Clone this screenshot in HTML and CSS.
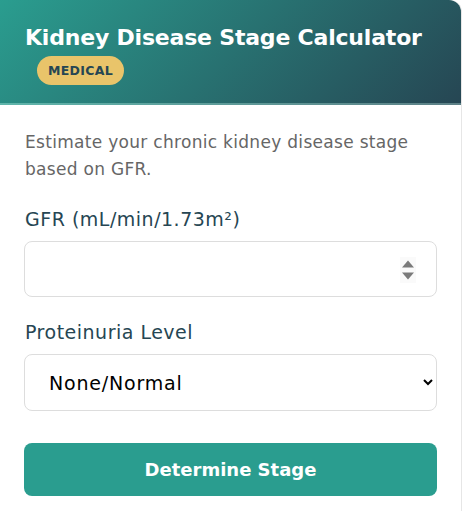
FILE: index.html
```html
<!DOCTYPE html>
<html lang="en">
<head>
<meta charset="utf-8">
<title>Kidney Disease Stage Calculator</title>
<link rel="stylesheet" href="styles.css">
</head>
<body>
<div class="card">
  <div class="header">
    <h1 class="title">Kidney Disease Stage Calculator</h1>
    <span class="badge">MEDICAL</span>
  </div>
  <div class="content">
    <p class="desc">Estimate your chronic kidney disease stage based on GFR.</p>
    <label class="label" for="gfr">GFR (mL/min/1.73m²)</label>
    <div class="num-wrap">
      <input class="field" id="gfr" type="number">
      <svg class="spin" width="16" height="26" viewBox="0 0 16 26" aria-hidden="true">
        <rect x="0" y="0" width="16" height="26" fill="#fafafa"/>
        <path d="M2 10.5 L8 3.5 L14 10.5 Z" fill="#7a7a7a"/>
        <path d="M2 15.5 L8 22.5 L14 15.5 Z" fill="#7a7a7a"/>
      </svg>
    </div>
    <label class="label" for="prot">Proteinuria Level</label>
    <select class="field select" id="prot">
      <option>None/Normal</option>
      <option>Mild</option>
      <option>Severe</option>
    </select>
    <button class="btn" type="button">Determine Stage</button>
  </div>
</div>
</body>
</html>
```
FILE: styles.css
```css
* { box-sizing: border-box; }
body {
  margin: 0;
  font-family: "DejaVu Sans", sans-serif;
  background: #fff;
}
.card {
  width: 461px;
  background: #fff;
  border-radius: 0 12px 0 0;
  box-shadow: 1px 0 0 #e6e6e6;
  overflow: hidden;
}
.header {
  height: 105px;
  padding: 24px 24px 0 25px;
  background: linear-gradient(135deg, #2a9d8f 0%, #264653 100%);
  border-bottom: 2px solid rgba(255, 255, 255, 0.25);
}
.title {
  margin: 0;
  color: #fff;
  font-size: 22px;
  font-weight: 700;
  line-height: 28px;
  letter-spacing: -0.2px;
}
.badge {
  display: inline-block;
  margin: 4px 0 0 12px;
  padding: 0 11px;
  height: 29px;
  line-height: 29px;
  border-radius: 15px;
  background: #e9c46a;
  color: #264653;
  font-size: 12.5px;
  font-weight: 700;
  letter-spacing: 0.3px;
}
.content {
  display: flex;
  flex-direction: column;
  padding: 24px 24px 24px 24px;
}
.desc {
  margin: 0 0 1px 1px;
  color: #666;
  font-size: 17px;
  line-height: 27px;
  letter-spacing: 0.3px;
}
.label {
  margin: 23px 0 10px 1px;
  color: #264653;
  font-size: 19px;
  line-height: 24px;
  letter-spacing: 0.5px;
}
.num-wrap {
  position: relative;
}
.field {
  display: block;
  height: 56px;
  width: 100%;
  border: 1px solid #ddd;
  border-radius: 8px;
  background: #fff;
  padding: 0 20px;
  font-family: inherit;
  font-size: 19px;
  letter-spacing: 0.8px;
  color: #000;
}
.field::-webkit-inner-spin-button,
.field::-webkit-outer-spin-button {
  -webkit-appearance: none;
  margin: 0;
}
.spin {
  position: absolute;
  right: 21px;
  top: 16px;
}
.select { height: 57px; }
.btn {
  margin-top: 32px;
  height: 53px;
  width: 100%;
  border: none;
  border-radius: 8px;
  background: #2a9d8f;
  color: #fff;
  font-family: inherit;
  font-size: 18px;
  font-weight: 700;
}
```
